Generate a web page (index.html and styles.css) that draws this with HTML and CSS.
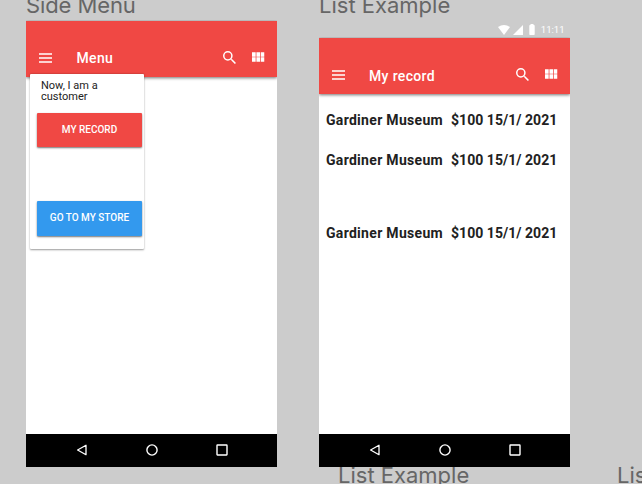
FILE: index.html
```html
<!DOCTYPE html>
<html lang="en">
<head>
<meta charset="utf-8">
<title>Design board</title>
<link rel="stylesheet" href="styles.css">
</head>
<body>
<svg class="defs" width="0" height="0" aria-hidden="true">
  <symbol id="menu" viewBox="0 0 13 10"><path d="M0 1h13M0 5h13M0 9h13" fill="none" stroke="#fff" stroke-width="1.3"/></symbol>
  <symbol id="search" viewBox="3 3 17.5 17.5"><path fill="#fff" d="M15.5 14h-.79l-.28-.27A6.47 6.47 0 0 0 16 9.5 6.5 6.5 0 1 0 9.5 16c1.61 0 3.09-.59 4.23-1.57l.27.28v.79l5 4.99L20.49 19zm-6 0a4.5 4.5 0 1 1 0-9 4.5 4.5 0 0 1 0 9z"/></symbol>
  <symbol id="grid" viewBox="4 5 17 13"><path fill="#fff" d="M4 11h5V5H4zm0 7h5v-6H4zm6 0h5v-6h-5zm6 0h5v-6h-5zm-6-7h5V5h-5zm6-6v6h5V5z"/></symbol>
  <symbol id="back" viewBox="0 0 12 12"><path d="M10 1.3v9.4L1.6 6z" fill="none" stroke="#fff" stroke-width="1.3" stroke-linejoin="round"/></symbol>
  <symbol id="home" viewBox="0 0 12 12"><circle cx="6" cy="6" r="5.1" fill="none" stroke="#fff" stroke-width="1.4"/></symbol>
  <symbol id="recent" viewBox="0 0 12 12"><rect x="1" y="1" width="10" height="10" rx=".4" fill="none" stroke="#fff" stroke-width="1.4"/></symbol>
</svg>
<main class="board">
  <h2 class="label label-side">Side Menu</h2>
  <h2 class="label label-list">List Example</h2>
  <h2 class="label label-list-2">List Example</h2>
  <h2 class="label label-list-3">List Example</h2>

  <section class="screen screen-menu">
    <header class="appbar">
      <svg class="i-menu"><use href="#menu"/></svg>
      <h1 class="title">Menu</h1>
      <svg class="i-search"><use href="#search"/></svg>
      <svg class="i-grid"><use href="#grid"/></svg>
    </header>
    <aside class="drawer">
      <p class="note">Now, I am a<br>customer</p>
      <button class="btn btn-red"><span>MY RECORD</span></button>
      <button class="btn btn-blue"><span>GO TO MY STORE</span></button>
    </aside>
    <nav class="navbar">
      <svg><use href="#back"/></svg>
      <svg><use href="#home"/></svg>
      <svg><use href="#recent"/></svg>
    </nav>
  </section>

  <section class="screen screen-list">
    <div class="status">
      <svg class="i-wifi" viewBox="0 0 12 10"><path fill="#fff" d="M0 2Q6-2 12 2L6 10z"/></svg>
      <svg class="i-cell" viewBox="0 0 10 10"><path fill="#fff" d="M10 0v10H0z"/></svg>
      <svg class="i-battery" viewBox="0 0 6 11"><path fill="#fff" d="M1.5 0h3v1H5q.7 0 .7.7v8.6q0 .7-.7.7H1q-.7 0-.7-.7V1.700Q.3 1 1 1h.5z"/></svg>
      <span class="clock">11:11</span>
    </div>
    <header class="appbar">
      <svg class="i-menu"><use href="#menu"/></svg>
      <h1 class="title">My record</h1>
      <svg class="i-search"><use href="#search"/></svg>
      <svg class="i-grid"><use href="#grid"/></svg>
    </header>
    <ul class="records">
      <li><span class="place">Gardiner Museum</span><span class="detail">$100 15/1/ 2021</span></li>
      <li><span class="place">Gardiner Museum</span><span class="detail">$100 15/1/ 2021</span></li>
      <li><span class="place">Gardiner Museum</span><span class="detail">$100 15/1/ 2021</span></li>
    </ul>
    <nav class="navbar">
      <svg><use href="#back"/></svg>
      <svg><use href="#home"/></svg>
      <svg><use href="#recent"/></svg>
    </nav>
  </section>
</main>
</body>
</html>
```
FILE: styles.css
```css
* { box-sizing: border-box; margin: 0; padding: 0; }
body { background: #ccc; font-family: Roboto, "Liberation Sans", sans-serif; overflow: hidden; }
.defs { position: absolute; }
.board { position: relative; width: 642px; height: 484px; overflow: hidden; background: #ccc; }
svg { display: block; flex: none; }

.label { position: absolute; font: 400 22px/26px Inter, sans-serif; color: #666; white-space: nowrap; }
.label-side { left: 26px; top: -8px; letter-spacing: -.1px; }
.label-list { left: 319px; top: -8px; }
.label-list-2 { left: 338px; top: 462px; }
.label-list-3 { left: 617px; top: 462px; }

.screen { position: absolute; width: 251px; display: flex; flex-direction: column; }
.screen-menu { left: 26px; top: 21px; height: 446px; background: #fff; }
.screen-list { left: 319px; top: 21px; height: 446px; background: linear-gradient(#ccc 18px, #fff 18px); }

.appbar { position: relative; flex: none; height: 56px; background: #f04844; display: flex; align-items: flex-end; padding: 0 12.500px 0 13px; box-shadow: 0 1px 3px rgba(0,0,0,.55); clip-path: inset(-1px 0 -8px 0); }
.i-menu { width: 13px; height: 10px; margin-bottom: 14.500px; }
.i-search { width: 13px; height: 13px; margin: 0 16px 13.500px auto; }
.i-grid { width: 12.500px; height: 10px; margin-bottom: 15px; }
.title { font-size: 14px; line-height: 18px; font-weight: 500; color: #fff; letter-spacing: .35px; margin: 0 0 10px 24.500px; }
.screen-list .title { margin-left: 24px; margin-bottom: 9.500px; }

.drawer { position: relative; flex: none; width: 114px; height: 175px; margin: -3px 0 0 4px; padding: 6px 2px 0 7px; background: #fff; border-radius: 1px; box-shadow: 0 .5px 2px rgba(0,0,0,.4); }
.note { height: 33px; padding-left: 4px; font-size: 11px; line-height: 11px; color: #222; }
.btn { display: block; width: 105px; height: 34px; border: 0; border-radius: 1px; font: 500 10px/34px Roboto, sans-serif; color: #fff; box-shadow: 0 1px 2px rgba(0,0,0,.55); white-space: nowrap; }
.btn-red { background: #f04844; }
.btn-blue { height: 35px; margin-top: 54px; background: #3399ee; line-height: 33px; padding-bottom: 2px; }

.navbar { flex: none; height: 33.500px; margin-top: auto; background: #000; display: flex; align-items: center; justify-content: space-between; padding: 0 49px 0 50px; }
.navbar svg { width: 12px; height: 12px; }

.status { flex: none; height: 17px; display: flex; align-items: center; padding: 0 5.500px 0 179px; }
.i-wifi { width: 12px; height: 10px; }
.i-cell { width: 10px; height: 10px; margin-left: 3px; }
.i-battery { width: 6px; height: 11px; margin-left: 6px; }
.clock { margin-left: auto; font-size: 9.500px; line-height: 12px; color: #fff; }

.records { list-style: none; padding: 17px 0 0 7px; }
.records li { display: flex; height: 39.500px; font-size: 14px; line-height: 18px; font-weight: 700; letter-spacing: .3px; color: #212121; white-space: nowrap; }
.records li:nth-child(2) { height: 73px; }
.place { width: 125px; }
.detail { letter-spacing: .04px; }
```
